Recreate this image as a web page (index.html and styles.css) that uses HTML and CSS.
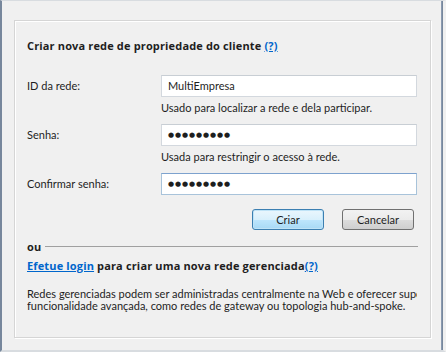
FILE: index.html
```html
<!DOCTYPE html>
<html lang="pt">
<head>
<meta charset="utf-8">
<link rel="stylesheet" href="styles.css">
</head>
<body>
<div class="window">
  <div class="panel">
    <div class="title">Criar nova rede de propriedade do cliente <a class="link" href="#">(?)</a></div>
    <div class="form">
      <div class="row">
        <label class="label">ID da rede:</label>
        <div class="field">
          <div class="input">MultiEmpresa</div>
          <div class="hint">Usado para localizar a rede e dela participar.</div>
        </div>
      </div>
      <div class="row">
        <label class="label">Senha:</label>
        <div class="field">
          <div class="input pw">●●●●●●●●●</div>
          <div class="hint">Usada para restringir o acesso à rede.</div>
        </div>
      </div>
      <div class="row">
        <label class="label">Confirmar senha:</label>
        <div class="field">
          <div class="input pw focus">●●●●●●●●●</div>
        </div>
      </div>
    </div>
    <div class="buttons">
      <button class="btn default">Criar</button>
      <button class="btn">Cancelar</button>
    </div>
    <div class="sep"><span class="ou">ou</span><span class="line"></span></div>
    <div class="login"><a class="link" href="#">Efetue login</a> para criar uma nova rede gerenciada<a class="link" href="#">(?)</a></div>
    <div class="desc">
      <div class="dline">Redes gerenciadas podem ser administradas centralmente na Web e oferecer suporte a</div>
      <div class="dline">funcionalidade avançada, como redes de gateway ou topologia hub-and-spoke.</div>
    </div>
  </div>
</div>
</body>
</html>
```
FILE: styles.css
```css
html, body {
  margin: 0;
  padding: 0;
  background: #f0f0f0;
}
body {
  font-family: "Lato", "Liberation Sans", sans-serif;
  font-size: 11px;
  color: #1e1e1e;
}
.window {
  width: 446px;
  height: 352px;
  box-sizing: border-box;
  border-left: 2px solid #77879c;
  border-right: 3px solid #f0f0f0;
  border-top: 1px solid #d8dce0;
  border-bottom: 2px solid #d8dce0;
  padding: 19px 0 0 12px;
  box-shadow: inset -1px 0 0 #77879c, inset -2px 0 0 #8a9ab0;
}
.panel {
  width: 417px;
  height: 318px;
  box-sizing: border-box;
  border: 1px solid #d5d5d5;
  box-shadow: inset 1px 1px 0 #ffffff, 1px 1px 0 #ffffff;
  padding: 16px 12px 0 12px;
}
.title, .ou, .login {
  font-family: "Open Sans", "Liberation Sans", sans-serif;
  font-size: 11px;
  font-weight: bold;
  letter-spacing: 0.15px;
}
.title {
  height: 18px;
  line-height: 18px;
}
.link {
  color: #0066cc;
  text-decoration: underline;
  font-weight: bold;
}
.form {
  margin-top: 20px;
  display: flex;
  flex-direction: column;
  gap: 8px;
}
.row {
  display: flex;
}
.label {
  width: 134px;
  line-height: 22px;
}
.field {
  display: flex;
  flex-direction: column;
}
.input {
  width: 256px;
  height: 22px;
  box-sizing: border-box;
  border: 1px solid #d3d8de;
  border-top-color: #c8ced4;
  background: #ffffff;
  padding: 0 6px;
  line-height: 20px;
}
.input.pw {
  font-family: "DejaVu Sans", sans-serif;
  font-size: 7px;
  letter-spacing: 0.9px;
  line-height: 20px;
}
.input.focus {
  border-color: #a8c3da;
  border-top-color: #7da2ce;
}
.hint {
  line-height: 16px;
  margin-top: 3px;
}
.buttons {
  display: flex;
  justify-content: flex-end;
  gap: 18px;
  margin-top: 14px;
  padding-right: 4px;
}
.btn {
  font-family: inherit;
  font-size: 11px;
  color: #1e1e1e;
  height: 21px;
  width: 72px;
  border-radius: 3px;
  border: 1px solid #707070;
  background: linear-gradient(#f2f2f2 0%, #ebebeb 50%, #dddddd 51%, #cfcfcf 100%);
  padding: 0;
}
.btn.default {
  border-color: #3c7fb1;
  background: linear-gradient(#eaf6fd 0%, #d9f0fc 50%, #bee6fd 51%, #a7d9f5 100%);
  box-shadow: inset 0 0 0 1px #bfe3f7;
}
.sep {
  display: flex;
  align-items: center;
  margin-top: 8px;
  height: 16px;
}
.ou {
  margin-right: 4px;
}
.line {
  flex: 1;
  height: 1px;
  background: #a0a0a0;
}
.login {
  margin-top: 4px;
  line-height: 16px;
}
.desc {
  margin-top: 14px;
  width: 390px;
  overflow: hidden;
}
.dline {
  white-space: nowrap;
  line-height: 12px;
}
```
